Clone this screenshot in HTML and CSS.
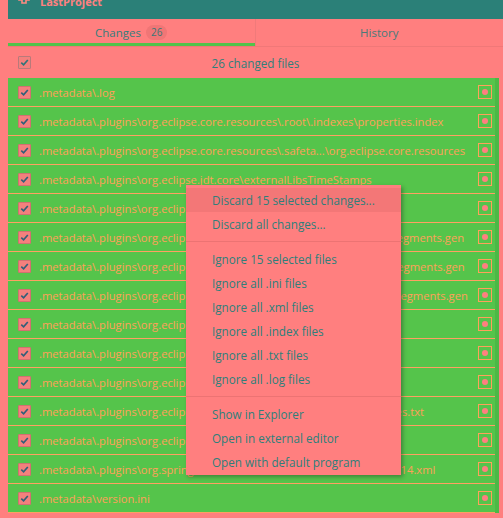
FILE: index.html
```html
<!DOCTYPE html>
<html>
<head>
<meta charset="utf-8">
<link rel="stylesheet" href="styles.css">
</head>
<body>
<div class="app">
  <header class="topbar">
    <svg class="repo-icon" width="12" height="10" viewBox="0 0 12 10"><path d="M1 0 V5 H4 V8 H8 V5 H11 V0" fill="none" stroke="#ff8a80" stroke-width="1.6"/></svg>
    <span class="title">LastProject</span>
  </header>
  <nav class="tabs">
    <div class="tab active"><span>Changes</span><span class="badge">26</span></div>
    <div class="tab">History</div>
  </nav>
  <div class="summary">
    <span class="cb head-cb"><svg viewBox="0 0 12 12"><path d="M2.5 6.2 L5 8.6 L9.6 3.2" /></svg></span>
    <span class="summary-text">26 changed files</span>
  </div>
  <ul class="files">
    <li class="row"><span class="cb"><svg viewBox="0 0 12 12"><path d="M2.5 6.2 L5 8.6 L9.6 3.2" /></svg></span><span class="path">.metadata\.log</span><span class="status"></span></li>
    <li class="row"><span class="cb"><svg viewBox="0 0 12 12"><path d="M2.5 6.2 L5 8.6 L9.6 3.2" /></svg></span><span class="path">.metadata\.plugins\org.eclipse.core.resources\.root\.indexes\properties.index</span><span class="status"></span></li>
    <li class="row"><span class="cb"><svg viewBox="0 0 12 12"><path d="M2.5 6.2 L5 8.6 L9.6 3.2" /></svg></span><span class="path">.metadata\.plugins\org.eclipse.core.resources\.safeta...\org.eclipse.core.resources</span><span class="status"></span></li>
    <li class="row"><span class="cb"><svg viewBox="0 0 12 12"><path d="M2.5 6.2 L5 8.6 L9.6 3.2" /></svg></span><span class="path">.metadata\.plugins\org.eclipse.jdt.core\externalLibsTimeStamps</span><span class="status"></span></li>
    <li class="row"><span class="cb"><svg viewBox="0 0 12 12"><path d="M2.5 6.2 L5 8.6 L9.6 3.2" /></svg></span><span class="path">.metadata\.plugins\org.eclipse.jdt.core\invalidArchivesCache</span><span class="status"></span></li>
    <li class="row"><span class="cb"><svg viewBox="0 0 12 12"><path d="M2.5 6.2 L5 8.6 L9.6 3.2" /></svg></span><span class="path">.metadata\.plugins\org.eclipse.m2e.core\nexus\1f3b9e0a2c6d4e70\segments.gen</span><span class="status"></span></li>
    <li class="row"><span class="cb"><svg viewBox="0 0 12 12"><path d="M2.5 6.2 L5 8.6 L9.6 3.2" /></svg></span><span class="path">.metadata\.plugins\org.eclipse.m2e.core\nexus\8c41d7b5e2f09a3b\segments.gen</span><span class="status"></span></li>
    <li class="row"><span class="cb"><svg viewBox="0 0 12 12"><path d="M2.5 6.2 L5 8.6 L9.6 3.2" /></svg></span><span class="path">.metadata\.plugins\org.eclipse.m2e.core\nexus\a06e5f93bd71c2e8f\segments.gen</span><span class="status"></span></li>
    <li class="row"><span class="cb"><svg viewBox="0 0 12 12"><path d="M2.5 6.2 L5 8.6 L9.6 3.2" /></svg></span><span class="path">.metadata\.plugins\org.eclipse.m2e.core\workspaceState.ser</span><span class="status"></span></li>
    <li class="row"><span class="cb"><svg viewBox="0 0 12 12"><path d="M2.5 6.2 L5 8.6 L9.6 3.2" /></svg></span><span class="path">.metadata\.plugins\org.eclipse.m2e.logback.configuration\0.log</span><span class="status"></span></li>
    <li class="row"><span class="cb"><svg viewBox="0 0 12 12"><path d="M2.5 6.2 L5 8.6 L9.6 3.2" /></svg></span><span class="path">.metadata\.plugins\org.eclipse.ui.workbench\workbench.xml</span><span class="status"></span></li>
    <li class="row"><span class="cb"><svg viewBox="0 0 12 12"><path d="M2.5 6.2 L5 8.6 L9.6 3.2" /></svg></span><span class="path">.metadata\.plugins\org.eclipse.jdt.ui\dialog_settings\savedIndexNames.txt</span><span class="status"></span></li>
    <li class="row"><span class="cb"><svg viewBox="0 0 12 12"><path d="M2.5 6.2 L5 8.6 L9.6 3.2" /></svg></span><span class="path">.metadata\.plugins\org.eclipse.ui.ide\dialog_settings.xml</span><span class="status"></span></li>
    <li class="row"><span class="cb"><svg viewBox="0 0 12 12"><path d="M2.5 6.2 L5 8.6 L9.6 3.2" /></svg></span><span class="path">.metadata\.plugins\org.springsource.ide.commons\content.1459550714.xml</span><span class="status"></span></li>
    <li class="row"><span class="cb"><svg viewBox="0 0 12 12"><path d="M2.5 6.2 L5 8.6 L9.6 3.2" /></svg></span><span class="path">.metadata\version.ini</span><span class="status"></span></li>
  </ul>
  <div class="menu">
    <div class="item hover">Discard 15 selected changes...</div>
    <div class="item">Discard all changes...</div>
    <div class="sep"></div>
    <div class="item">Ignore 15 selected files</div>
    <div class="item">Ignore all .ini files</div>
    <div class="item">Ignore all .xml files</div>
    <div class="item">Ignore all .index files</div>
    <div class="item">Ignore all .txt files</div>
    <div class="item">Ignore all .log files</div>
    <div class="sep"></div>
    <div class="item">Show in Explorer</div>
    <div class="item">Open in external editor</div>
    <div class="item">Open with default program</div>
  </div>
</div>
</body>
</html>
```

FILE: styles.css
```css
html, body {
  margin: 0;
  padding: 0;
  background: #ff7f7f;
  width: 503px;
  height: 518px;
  overflow: hidden;
  font-family: "Open Sans", "Noto Sans", sans-serif;
  font-size: 11px;
}
.app {
  position: relative;
  margin-left: 8px;
}
.topbar {
  height: 19px;
  background: #2b8078;
  display: flex;
  align-items: flex-start;
  overflow: hidden;
}
.repo-icon {
  margin-left: 10px;
  margin-top: -5px;
}
.title {
  margin-left: 10px;
  margin-top: -6px;
  font-weight: bold;
  font-size: 11px;
  line-height: 15px;
  color: #ff8080;
}
.tabs {
  display: grid;
  grid-template-columns: 1fr 1fr;
  height: 27px;
  border-bottom: 1px solid #f07878;
}
.tab {
  display: flex;
  align-items: center;
  justify-content: center;
  gap: 5px;
  color: #4a7a7a;
  font-size: 11.5px;
}
.tab.active {
  color: #357d7b;
  border-right: 1px solid #f07a7a;
  box-shadow: inset 0 -3px 0 #52c34a;
}
.badge {
  background: #f07676;
  border-radius: 8px;
  padding: 0 5px;
  font-size: 10px;
  line-height: 15px;
  color: #3a7676;
}
.summary {
  height: 31px;
  display: flex;
  align-items: center;
  position: relative;
}
.summary-text {
  flex: 1;
  text-align: center;
  color: #2f7f7b;
  font-size: 11.7px;
}
.cb {
  width: 11px;
  height: 11px;
  border: 1px solid #d27070;
  background: #f4807d;
  border-radius: 1px;
  display: inline-flex;
  flex: none;
}
.cb svg {
  width: 11px;
  height: 11px;
  fill: none;
  stroke: #2f5f7a;
  stroke-width: 1.8;
}
.head-cb {
  position: absolute;
  left: 10px;
  top: 9px;
  border-color: #b87a7a;
}
.head-cb svg { stroke: #2f7479; }
.files {
  list-style: none;
  margin: 0;
  padding: 0;
  width: 487px;
  border-right: 4px solid #4cb846;
}
.row {
  height: 28px;
  border-bottom: 1px solid #ff9f62;
  background: #55c44b;
  display: flex;
  align-items: center;
  padding-left: 10px;
  padding-right: 3px;
}
.path {
  flex: 1;
  margin-left: 8px;
  color: #ffa05a;
  font-size: 11.2px;
  white-space: nowrap;
  overflow: hidden;
}
.status {
  width: 12px;
  height: 12px;
  border: 1px solid #ffa05a;
  flex: none;
  display: flex;
  align-items: center;
  justify-content: center;
}
.status::after {
  content: "";
  width: 6px;
  height: 6px;
  border-radius: 50%;
  background: #ff7f7f;
}
.menu {
  position: absolute;
  left: 178px;
  top: 185px;
  width: 215px;
  background: #ff7f7f;
  padding: 3px 0 1px;
  box-shadow: 2px 2px 4px rgba(40, 60, 40, 0.45);
}
.item {
  height: 24px;
  line-height: 24px;
  padding-left: 26px;
  color: #2e7f7b;
  font-size: 11.7px;
}
.item.hover {
  background: #f37777;
}
.sep {
  height: 1px;
  background: #ec7373;
  margin: 5px 0;
}
```
